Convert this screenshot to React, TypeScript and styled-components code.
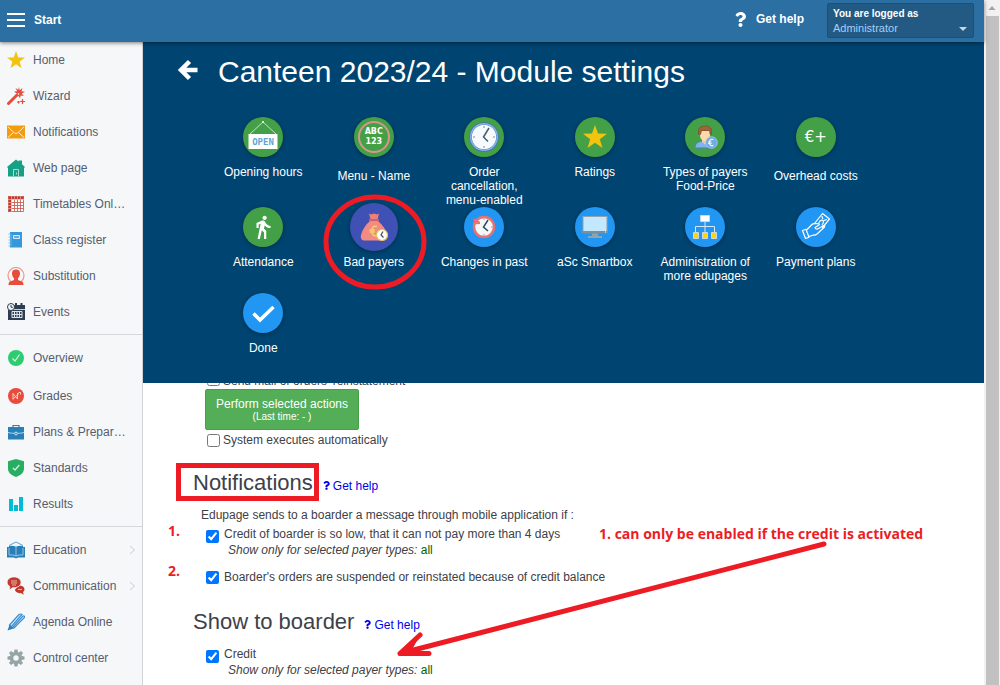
import React from "react";
import styled, { createGlobalStyle, css } from "styled-components";
import { FaQuestion } from "react-icons/fa";
import { MdDirectionsWalk } from "react-icons/md";

const RED = "#ed1c24";

const GlobalStyle = createGlobalStyle`
  * { box-sizing: border-box; }
  body {
    margin: 0;
    background: #fff;
    color: #3d4148;
    font: 12px/16px "Liberation Sans", Arial, sans-serif;
  }
  button { font: inherit; color: inherit; border: 0; padding: 0; background: none; cursor: pointer; }
  a { color: inherit; text-decoration: none; }
  svg { display: block; }
`;

const Page = styled.div`
  display: flex;
  min-height: 100vh;
`;

const Shell = styled.div`
  flex: 1;
  min-width: 0;
  display: flex;
  flex-direction: column;
`;

const ScrollTrack = styled.div`
  flex: 0 0 16px;
  display: flex;
  flex-direction: column;
  align-items: center;
  background: #f1f1f1;
`;

const ScrollArrow = styled.svg`
  width: 16px;
  height: 16px;
  fill: #a3a3a3;
`;

const ScrollThumb = styled.div`
  flex: 1;
  width: 13px;
  background: #c1c1c1;
`;

/* Header */

const TopBar = styled.header`
  position: relative;
  z-index: 2;
  display: flex;
  align-items: center;
  height: 42px;
  padding: 0 10px 2px 7px;
  background: #2b6fa3;
  color: #fff;
  font-weight: 700;
  box-shadow: 0 1px 4px rgba(0, 0, 0, 0.5);
`;

const StartButton = styled.button`
  display: flex;
  align-items: center;
  gap: 9px;
  margin-right: auto;
  font-weight: 700;
`;

const HelpButton = styled.a`
  display: flex;
  align-items: center;
  gap: 8px;
  margin-right: 23px;
  padding-bottom: 2px;
`;

const Account = styled.button`
  display: flex;
  justify-content: space-between;
  align-items: flex-end;
  width: 147px;
  height: 35px;
  padding: 4px 6px 2px 5px;
  border: 1px solid #1d5078;
  border-radius: 2px;
  background: #235a84;
  text-align: left;
`;

const AccountText = styled.span`
  display: flex;
  flex-direction: column;
  font-size: 10px;
  line-height: 14px;
  font-weight: 700;
`;

const AccountRole = styled.span`
  color: #a6cdf6;
  font-size: 11px;
  font-weight: 400;
`;

/* Sidebar */

const Body = styled.div`
  flex: 1;
  display: flex;
`;

const Sidebar = styled.nav`
  flex: 0 0 143px;
  border-right: 1px solid #cfd2d6;
  background: #f5f7f9;
  color: #565d70;
`;

const NavGroup = styled.ul`
  margin: 0;
  padding: 0 0 4px;
  list-style: none;
  & + & {
    padding-top: 5px;
    border-top: 1px solid #d4d8dc;
  }
`;

const NavItem = styled.li<{ $lead?: boolean }>`
  padding-bottom: ${(p) => (p.$lead ? "2px" : "0")};
`;

const NavLink = styled.a`
  display: flex;
  align-items: center;
  gap: 8px;
  height: 36px;
  padding: 0 6px 0 7px;
`;

const NavIcon = styled.svg`
  flex: none;
  width: 18px;
  height: 18px;
`;

const NavText = styled.span`
  flex: 1;
`;

/* Module settings panel */

const Main = styled.main`
  flex: 1;
  min-width: 0;
`;

const Panel = styled.section`
  padding: 0 113px 4px 65px;
  background: #004572;
  color: #fff;
`;

const TitleRow = styled.div`
  display: flex;
  align-items: center;
  gap: 19px;
  height: 60px;
  margin: 0 0 15px -31px;
`;

const BackButton = styled.button`
  padding-bottom: 4px;
`;

const Title = styled.h1`
  margin: 0;
  font-size: 30px;
  line-height: 36px;
  font-weight: 400;
  white-space: nowrap;
`;

const Tiles = styled.div`
  display: grid;
  grid-template-columns: repeat(6, 1fr);
  grid-auto-rows: minmax(86px, auto);
`;

const Tile = styled.button<{ $low?: boolean }>`
  position: relative;
  display: flex;
  flex-direction: column;
  align-items: center;
  gap: ${(p) => (p.$low ? "12px" : "8px")};
  line-height: 14px;
`;

const Disc = styled.span<{ $tone: string; $active?: boolean }>`
  display: grid;
  place-items: center;
  width: 40px;
  height: 40px;
  border-radius: 50%;
  background: ${(p) => p.$tone};
  box-shadow: 0 1px 5px rgba(0, 0, 0, 0.35);
  ${(p) =>
    p.$active &&
    css`
      width: 48px;
      height: 48px;
      margin: -4px;
    `}
`;

const TileLabel = styled.span`
  max-width: 100px;
`;

const Ring = styled.svg`
  position: absolute;
  top: -14px;
  left: 50%;
  margin-left: -52px;
  width: 106px;
  height: 98px;
  fill: none;
  stroke: ${RED};
  stroke-width: 5px;
  pointer-events: none;
`;

/* Settings below the panel */

const Settings = styled.section`
  position: relative;
  padding-left: 50px;
`;

const PlainCheck = styled.label`
  display: flex;
  align-items: center;
  gap: 3px;
  padding-left: 14px;
  line-height: 18px;
`;

/* A row that is scrolled almost wholly under the panel */
const ScrolledRow = styled.div`
  display: flex;
  align-items: flex-end;
  height: 3px;
  overflow: hidden;
  ${PlainCheck} {
    align-items: flex-end;
    line-height: 10px;
  }
`;

const ActionRow = styled.div`
  padding: 3px 0 1px 12px;
`;

const ActionButton = styled.button`
  display: flex;
  flex-direction: column;
  align-items: center;
  justify-content: center;
  width: 154px;
  height: 41px;
  border: 1px solid #45a049;
  border-radius: 2px;
  background: #54ad57;
  color: #fff;
  line-height: 14px;
`;

const Small = styled.span`
  font-size: 10px;
  line-height: 12px;
`;

const Box = styled.input`
  flex: none;
  width: 13px;
  height: 13px;
  margin: 0;
  accent-color: #0075ff;
`;

const HeadRow = styled.div`
  display: flex;
  align-items: baseline;
  gap: 9px;
  margin: 22px 0 6px;
  line-height: 30px;
  ${PlainCheck} + & {
    margin-top: 19px;
  }
`;

const Heading = styled.h2`
  position: relative;
  margin: 0;
  font-size: 22px;
  font-weight: 400;
`;

const Frame = styled.span`
  position: absolute;
  inset: -5px -6px -3px -17px;
  border: 5px solid ${RED};
`;

const HelpLink = styled.a`
  display: flex;
  align-items: baseline;
  gap: 2px;
  color: #0000ee;
`;

const Intro = styled.p`
  margin: 0;
  padding-left: 8px;
`;

const Option = styled.div<{ $noted?: boolean; $gap?: boolean }>`
  display: flex;
  align-items: flex-start;
  gap: 5px;
  margin-top: ${(p) => (p.$gap ? "11px" : "3px")};
  padding-left: 13px;
  ${Box} {
    margin-top: ${(p) => (p.$noted ? "4px" : "2px")};
  }
`;

const Note = styled.div`
  padding-left: 4px;
  font-style: italic;
`;

const All = styled.a`
  color: #006400;
  font-style: normal;
`;

const Remark = styled.span<{ $x: number; $y: number }>`
  position: absolute;
  left: ${(p) => p.$x}px;
  top: ${(p) => p.$y}px;
  color: ${RED};
  font: 700 14px/18px "Noto Sans", "Open Sans", sans-serif;
  font-family: "Open Sans", "Noto Sans", sans-serif;
  white-space: nowrap;
`;

const Arrow = styled.svg`
  position: absolute;
  left: 250px;
  top: 155px;
  width: 440px;
  height: 125px;
  fill: none;
  stroke: ${RED};
  stroke-width: 5px;
  stroke-linecap: round;
  stroke-linejoin: round;
  pointer-events: none;
`;

/* Sidebar drawings, all on an 18 x 18 grid */

const gearTeeth = [0, 45, 90, 135, 180, 225, 270, 315];

const navIcons: Record<string, React.ReactNode> = {
  star: <path d="M9 0l2.300 6.400 6.700.2-5.400 4.100 2 6.600L9 13.300 3.400 17.300l2-6.600L0 6.600l6.700-.2z" fill="#f1c40f" />,
  wand: (
    <g stroke="#e74c3c" fill="none">
      <path d="M1.500 16.500L10 8" strokeWidth="3" strokeLinecap="round" />
      <path d="M12 0l.7 3.200L15.500 1l-1 3.300 3.500.5-3.200 1.700 2 2.500-3.300-.6-.3 3-1.900-2.600-2.500 1 1.200-3L7 4.500l3.200-.2L8.500 1l2.800 1.700z" fill="#e74c3c" stroke="none" />
      <path d="M12 6.500L11 7.500" stroke="#f5f7f9" strokeWidth="1.500" />
      <path d="M15.500 12v5M13 14.500h5M11.500 14v2.400M10.300 15.200h2.400" strokeWidth="1.200" />
    </g>
  ),
  mail: (
    <g>
      <path d="M0 2.500h18v13H0z" fill="#f39c12" />
      <path d="M1 4l6.500 6Q9 11 10.500 10L17 4M1 14.500l5.500-5M17 14.500l-5.500-5" stroke="#fdebd0" fill="none" />
    </g>
  ),
  house: (
    <g>
      <path d="M0 8L9 .5l2.500 2V1.500H15v3.700L18 8l-1 1v8.500H1V9z" fill="#16a085" />
      <path d="M6.500 17.500v-7h5v7M9.500 13.500v2" stroke="#a9dccf" fill="none" />
    </g>
  ),
  table: (
    <g>
      <path d="M1 1h16v16H1z" fill="#fff" />
      <path d="M1 1h16v3H1zM1 1h3v16H1z" fill="#c0392b" />
      <path d="M1.500 1.500h15v15h-15zM7.500 4v13M10.500 4v13M13.500 4v13M4 7.500h13M4 10.500h13M4 13.500h13" fill="none" stroke="#cd6155" strokeWidth=".9" />
      <path d="M4.500 1v16M7.500 1v3M10.500 1v3M13.500 1v3M1 4.500h16M1 7.500h3M1 10.500h3M1 13.500h3" stroke="#e6b0aa" strokeWidth=".7" />
    </g>
  ),
  notebook: (
    <g>
      <path d="M3 1h12v15.500H3z" fill="#3498db" />
      <path d="M1.500 3h2M1.500 6h2M1.500 9h2M1.500 12h2M1.500 15h2" stroke="#7fb9e3" />
      <path d="M6.500 4.500h6v3h-6z" fill="#5dade2" stroke="#d6eaf8" />
      <path d="M4 3v12" stroke="#85c1e9" strokeWidth=".7" />
    </g>
  ),
  person: (
    <g>
      <circle cx="9" cy="8.500" r="8" fill="none" stroke="#f1948a" strokeWidth="1.200" />
      <path d="M9 2.500c3 0 4.300 2 4 4.500-.2 2-1 3.300-2 4.200V13l4.500 1.800q1 .8 1 3.200H1.500q0-2.400 1-3.200L7 13v-1.800C6 10.300 5.200 9 5 7c-.3-2.500 1-4.500 4-4.500z" fill="#e74c3c" />
    </g>
  ),
  calendar: (
    <g>
      <path d="M1 2h17v15H1z" fill="#2c3e50" />
      <path d="M1 6.500h17" stroke="#f5f7f9" strokeWidth=".8" />
      <path d="M5 8.500h10v6H5zM7.500 8v7M10 8v7M12.500 8v7M5 11.500h10" fill="none" stroke="#dfe4e8" />
      <path d="M9 0v3M14.500 0v3" stroke="#2c3e50" strokeWidth="2" />
      <circle cx="4" cy="4" r="3.500" fill="#f5f7f9" stroke="#2c3e50" />
      <path d="M4 2v2.300h1.800" stroke="#2c3e50" fill="none" />
    </g>
  ),
  check: (
    <g>
      <circle cx="9" cy="9" r="8" fill="#2ecc71" />
      <path d="M5.500 9.500L8 12l4.500-6.500" stroke="#d5f5e3" fill="none" strokeWidth="1.200" />
    </g>
  ),
  grades: (
    <g>
      <circle cx="9" cy="9" r="8" fill="#e74c3c" />
      <path d="M6 12.500v-6l4.500 5.500V6M6 12l6-5.500M11.500 5.500h2v2" stroke="#f9d0cb" fill="none" />
    </g>
  ),
  briefcase: (
    <g>
      <path d="M6 4v-1.500h6V4" fill="none" stroke="#2980b9" strokeWidth="1.200" />
      <path d="M1 4h16v12.500H1z" fill="#2980b9" />
      <path d="M1 9.500q4 1 6.500.8M17 9.500q-4 1-6.500.8" stroke="#aed6f1" fill="none" />
      <circle cx="9" cy="10.500" r="1.400" fill="#2980b9" stroke="#d6eaf8" />
    </g>
  ),
  shield: (
    <g>
      <path d="M9 0l8 2.200v7.300C17 14 13.500 16.300 9 18c-4.500-1.700-8-4-8-8.500V2.200z" fill="#27ae60" />
      <path d="M5.800 8.800L8 11l4.300-5" stroke="#d5f5e3" fill="none" strokeWidth="1.200" />
    </g>
  ),
  bars: <path d="M2 4h4v12H2zM7 10h4v6H7zM12 2h4v14h-4z" fill="#00bcd4" />,
  book: (
    <g>
      <path d="M2 4.500L9 1l7 3.500" fill="none" stroke="#5ba5d4" />
      <path d="M0 6h2V5q4-1 7 .8 3-1.800 7-.8v1h2v10.500h-7l-2 1-2-1H0z" fill="#2980b9" />
      <path d="M9 6v9M2 7v7q4.500-.5 7 1 2.500-1.500 7-1V7" stroke="#aed6f1" fill="none" strokeWidth=".8" />
    </g>
  ),
  chat: (
    <g>
      <path d="M12 8.500c3.500 0 5.500 1.500 5.500 3.800 0 1.200-.6 2.200-1.500 2.800l.8 2.700-3-1.700c-3.500.3-5.800-1.300-5.800-3.600z" fill="#c0392b" />
      <path d="M7 0c4 0 7 2.300 7 5.300s-3 5.400-7 5.400l-1.200-.1L2.500 13l.3-3.500C1.100 8.500.2 7 .2 5.300.2 2.300 3 0 7 0z" fill="#c0392b" stroke="#f5f7f9" strokeWidth=".7" />
      <path d="M4 4h6M4 6h6M5 8h4M11 12.500h4" stroke="#f2d7d5" strokeWidth=".8" />
    </g>
  ),
  pencil: (
    <g fill="none" stroke="#3b8fd0" strokeWidth="1.200">
      <path d="M5.500 14.500L16 3q2-.5 1.500 1.500L7 15z" fill="#d4e8f8" />
      <path d="M2.500 12L12 1.500q1.500-1 3 0L4.500 13.500z" fill="#d4e8f8" />
      <path d="M.5 17.500L2.500 12l4 3.500z" fill="#2980b9" stroke="none" />
    </g>
  ),
  gear: (
    <g>
      {gearTeeth.map((angle) => (
        <path key={angle} d="M7.500.5h3l.7 4H6.800z" fill="#95a5a6" transform={`rotate(${angle} 9 9)`} />
      ))}
      <circle cx="9" cy="9" r="4.400" fill="none" stroke="#95a5a6" strokeWidth="3.400" />
    </g>
  ),
};

type NavEntry = { icon: string; text: string; lead?: boolean; more?: boolean };

const navGroups: NavEntry[][] = [
  [
    { icon: "star", text: "Home" },
    { icon: "wand", text: "Wizard" },
    { icon: "mail", text: "Notifications" },
    { icon: "house", text: "Web page" },
    { icon: "table", text: "Timetables Onl…" },
    { icon: "notebook", text: "Class register" },
    { icon: "person", text: "Substitution" },
    { icon: "calendar", text: "Events" },
  ],
  [
    { icon: "check", text: "Overview", lead: true },
    { icon: "grades", text: "Grades" },
    { icon: "briefcase", text: "Plans & Prepar…" },
    { icon: "shield", text: "Standards" },
    { icon: "bars", text: "Results" },
  ],
  [
    { icon: "book", text: "Education", more: true },
    { icon: "chat", text: "Communication", more: true },
    { icon: "pencil", text: "Agenda Online" },
    { icon: "gear", text: "Control center" },
  ],
];

/* Tile drawings */

const AbcRing = styled.span`
  display: grid;
  place-items: center;
  width: 32px;
  height: 32px;
  border: 2px solid #d9958a;
  border-radius: 50%;
  font: 700 8px/10px "DejaVu Sans", sans-serif;
`;

const EuroText = styled.span`
  font: 400 15px/18px "DejaVu Sans", sans-serif;
`;

const OpenSign = (
  <svg width="40" height="40" viewBox="0 0 40 40">
    <path d="M7 17L20 5l13 12" fill="none" stroke="#c3e3c4" />
    <circle cx="20" cy="5" r="1" fill="#fff" />
    <path d="M5.500 17h29v15h-29z" fill="#fff" />
    <text x="20" y="28" textAnchor="middle" fontFamily="DejaVu Sans Mono, monospace" fontSize="9" fontWeight="700" fill="#5fa5d0">OPEN</text>
  </svg>
);

const Clock = (
  <svg width="40" height="40" viewBox="0 0 40 40">
    <circle cx="20" cy="20" r="13.500" fill="#f7fafc" stroke="#3e6fb5" strokeWidth="2.500" />
    <circle cx="20" cy="20" r="13.300" fill="none" stroke="#8ab4e8" strokeWidth="1.500" />
    <path d="M20 9v2M20 29v2M9 20h2M29 20h2" stroke="#7d8fa3" />
    <path d="M25 11l-5.500 9 4.500 4.500" fill="none" stroke="#4a5a6a" strokeWidth="1.500" />
  </svg>
);

const Star = (
  <svg width="40" height="40" viewBox="0 0 40 40">
    <path d="M20 8l3 8.500 9 .2-7.200 5.500 2.700 8.800-7.500-5.200-7.500 5.200 2.700-8.800L8 16.700l9-.2z" fill="#f1c40f" />
  </svg>
);

const Payer = (
  <svg width="40" height="40" viewBox="0 0 40 40">
    <path d="M10 31c0-5 3-6 7-7h5c4 1 6 3 6 7z" fill="#7fb2ee" stroke="#4a7fc0" />
    <path d="M17 21h6v4l-3 2.500-3-2.500z" fill="#f3c99b" />
    <path d="M15 14h10v4c0 4-2.500 6-5 6s-5-2-5-6z" fill="#fbd9a8" />
    <path d="M13.500 17v-3c0-3 2-4.500 4-4.500 4-1.500 9 0 9 4v4l-1.500-.5-.5-3.500h-8l-1 4z" fill="#a5603c" stroke="#7d452b" strokeWidth=".6" />
    <circle cx="26.500" cy="25.500" r="5.800" fill="#72a9ea" stroke="#a9c9f2" strokeWidth=".8" />
    <path d="M28.500 22.500q-4-1-4 3t4 3M23 25h3.500M23 26.500h3.500" fill="none" stroke="#fff2c2" strokeWidth="1.200" />
  </svg>
);

const MoneyBag = (
  <svg width="48" height="48" viewBox="0 0 48 48">
    <path d="M19 10.500l2 1 3-1 3 1 2-1-1.500 6h-7z" fill="#ef8079" />
    <path d="M20 18h8c5 4 8 9 9.500 14 .8 3-1 5.500-4 5.500h-19c-3 0-4.300-2.500-3.500-5.500 1.500-5 4-10 9-14z" fill="#f28b82" />
    <path d="M19 17h10" stroke="#d96161" strokeWidth="1.800" />
    <path d="M27 23.500q-5-1.500-5 4.500t5 4.500M19.500 27h5.500M19.500 29h5.500" fill="none" stroke="#f6cf70" strokeWidth="1.500" />
    <circle cx="32" cy="32" r="5.500" fill="#fff" stroke="#e5c35c" strokeWidth="1.200" />
    <path d="M33 28.500l-2 3.500 2.500 2.500" fill="none" stroke="#3c4a5a" strokeWidth="1.200" />
  </svg>
);

const History = (
  <svg width="40" height="40" viewBox="0 0 40 40">
    <circle cx="20" cy="20" r="10" fill="#f5f8fb" stroke="#e57373" strokeWidth="2.500" />
    <path d="M9.500 11l1 6.500 5.500-3z" fill="#ef7070" />
    <path d="M9 16.500l7-.5" stroke="#ef7070" strokeWidth="2" />
    <path d="M24 13l-4.500 7 4.500 4" fill="none" stroke="#34495e" strokeWidth="1.500" />
    <path d="M20 11.500v1.500M20 27v1.500M27 20h1.500" stroke="#8795a3" />
  </svg>
);

const Monitor = (
  <svg width="40" height="40" viewBox="0 0 40 40">
    <path d="M7.500 9h25v17h-25z" fill="#90a4ae" />
    <path d="M8.500 10h23v14h-23z" fill="#c3e7fd" />
    <path d="M7.500 24h25v2.500h-25z" fill="#78909c" />
    <path d="M17 26.500h6v3h-6zM13 29h14v2H13z" fill="#90a4ae" />
    <path d="M30 25h1" stroke="#fff" />
  </svg>
);

const Chart = (
  <svg width="40" height="40" viewBox="0 0 40 40">
    <path d="M20 14v11M10.500 25v-5.500h19V25" fill="none" stroke="#dbe7f0" />
    <path d="M15.500 8.500h9v6h-9z" fill="#fff" stroke="#cfd8dc" />
    <path d="M8.500 25.500h5v6h-5zM17.500 25.500h5v6h-5zM26.500 25.500h5v6h-5z" fill="#ffd600" stroke="#cfd8dc" />
  </svg>
);

const Payment = (
  <svg width="40" height="40" viewBox="0 0 40 40">
    <g fill="none" stroke="#fff" strokeWidth="1.200" strokeLinejoin="round" strokeLinecap="round">
      <path d="M6.500 23.500l3.500-1.200 3 8-3.500 1.200z" />
      <path d="M10.500 23l5.500-5.500q1-1 3-.8l3-.2q2 .2 1 1.500l-4 2.500q1 2.500 3.500 1l5-3q1.800 0 1 1.500l-7.500 7q-1.500 1.300-3.500 1.200l-5 1.300" />
      <path d="M18.500 16.500L26.500 6.500l7 5.500-7 8.500" />
      <path d="M26 9.500l.8 2.200M30.500 12.500l-2.500 1" />
      <path d="M23 15.500q1.500-3 3.500-2.200 2 1.200-.2 4.200" />
    </g>
  </svg>
);

const Tick = (
  <svg width="40" height="40" viewBox="0 0 40 40">
    <path d="M10.500 20.500l6.500 6.500 13.500-13" fill="none" stroke="#fff" strokeWidth="3.500" />
  </svg>
);

const GREEN = "#43a047";
const BLUE = "#2196f3";

type TileEntry = { label: React.ReactNode; tone: string; art: React.ReactNode; low?: boolean; active?: boolean };

const tiles: TileEntry[] = [
  { label: "Opening hours", tone: GREEN, art: OpenSign },
  { label: "Menu - Name", tone: GREEN, low: true, art: <AbcRing>ABC<br />123</AbcRing> },
  { label: "Order cancellation, menu-enabled", tone: GREEN, art: Clock },
  { label: "Ratings", tone: GREEN, art: Star },
  { label: <>Types of payers<br />Food-Price</>, tone: GREEN, art: Payer },
  { label: "Overhead costs", tone: GREEN, low: true, art: <EuroText>€+</EuroText> },
  { label: "Attendance", tone: GREEN, art: <MdDirectionsWalk size={26} /> },
  { label: "Bad payers", tone: "#3f51b5", active: true, art: MoneyBag },
  { label: "Changes in past", tone: BLUE, art: History },
  { label: "aSc Smartbox", tone: BLUE, art: Monitor },
  { label: "Administration of more edupages", tone: BLUE, art: Chart },
  { label: "Payment plans", tone: BLUE, art: Payment },
  { label: "Done", tone: BLUE, art: Tick },
];

function GetHelp() {
  return (
    <HelpLink href="#help">
      <FaQuestion size={9} />
      Get help
    </HelpLink>
  );
}

function PayerNote() {
  return (
    <Note>
      Show only for selected payer types: <All href="#all">all</All>
    </Note>
  );
}

export default function App() {
  return (
    <Page>
      <GlobalStyle />
      <Shell>
        <TopBar>
          <StartButton>
            <svg width="18" height="14" viewBox="0 0 18 14">
              <path d="M0 1h18M0 7h18M0 13h18" stroke="#fff" strokeWidth="2" />
            </svg>
            Start
          </StartButton>
          <HelpButton href="#help">
            <FaQuestion size={15} />
            Get help
          </HelpButton>
          <Account aria-haspopup="menu">
            <AccountText>
              You are logged as
              <AccountRole>Administrator</AccountRole>
            </AccountText>
            <svg width="8" height="10" viewBox="0 0 8 10">
              <path d="M0 2h8L4 6z" fill="#c9d6e2" />
            </svg>
          </Account>
        </TopBar>
        <Body>
          <Sidebar>
            {navGroups.map((group, i) => (
              <NavGroup key={i}>
                {group.map((item) => (
                  <NavItem key={item.text} $lead={item.lead}>
                    <NavLink href="#">
                      <NavIcon viewBox="0 0 18 18">{navIcons[item.icon]}</NavIcon>
                      <NavText>{item.text}</NavText>
                      {item.more && (
                        <svg width="7" height="10" viewBox="0 0 7 10">
                          <path d="M1 1l4.500 4L1 9" fill="none" stroke="#c8ccd2" />
                        </svg>
                      )}
                    </NavLink>
                  </NavItem>
                ))}
              </NavGroup>
            ))}
          </Sidebar>
          <Main>
            <Panel>
              <TitleRow>
                <BackButton aria-label="Back">
                  <svg width="22" height="22" viewBox="0 0 22 22">
                    <path d="M20.500 11H5M12.500 2.500L4 11l8.500 8.500" fill="none" stroke="#fff" strokeWidth="4.500" />
                  </svg>
                </BackButton>
                <Title>Canteen 2023/24 - Module settings</Title>
              </TitleRow>
              <Tiles>
                {tiles.map((tile, i) => (
                  <Tile key={i} $low={tile.low}>
                    <Disc $tone={tile.tone} $active={tile.active}>
                      {tile.art}
                    </Disc>
                    <TileLabel>{tile.label}</TileLabel>
                    {tile.active && (
                      <Ring viewBox="0 0 106 98">
                        <ellipse cx="53" cy="49" rx="49" ry="45" />
                      </Ring>
                    )}
                  </Tile>
                ))}
              </Tiles>
            </Panel>
            <Settings>
              <ScrolledRow>
                <PlainCheck>
                  <Box type="checkbox" />
                  Send mail of orders' reinstatement
                </PlainCheck>
              </ScrolledRow>
              <ActionRow>
                <ActionButton>
                  Perform selected actions
                  <Small>(Last time: - )</Small>
                </ActionButton>
              </ActionRow>
              <PlainCheck>
                <Box type="checkbox" />
                System executes automatically
              </PlainCheck>
              <HeadRow>
                <Heading>
                  Notifications
                  <Frame />
                </Heading>
                <GetHelp />
              </HeadRow>
              <Intro>Edupage sends to a boarder a message through mobile application if :</Intro>
              <Option $noted>
                <Box type="checkbox" id="low-credit" defaultChecked />
                <div>
                  <label htmlFor="low-credit">Credit of boarder is so low, that it can not pay more than 4 days</label>
                  <PayerNote />
                </div>
              </Option>
              <Option $gap>
                <Box type="checkbox" id="suspended" defaultChecked />
                <label htmlFor="suspended">Boarder's orders are suspended or reinstated because of credit balance</label>
              </Option>
              <HeadRow>
                <Heading>Show to boarder</Heading>
                <GetHelp />
              </HeadRow>
              <Option $noted>
                <Box type="checkbox" id="credit" defaultChecked />
                <div>
                  <label htmlFor="credit">Credit</label>
                  <PayerNote />
                </div>
              </Option>
              <Remark $x={25} $y={139}>1.</Remark>
              <Remark $x={25} $y={179}>2.</Remark>
              <Remark $x={456} $y={142}>1. can only be enabled if the credit is activated</Remark>
              <Arrow viewBox="0 0 440 125">
                <path d="M431 6L7 115.500M27 97L7 115.500H36" />
                <path d="M27 97L7 115.500H36L20 110z" fill={RED} stroke="none" />
              </Arrow>
            </Settings>
          </Main>
        </Body>
      </Shell>
      <ScrollTrack>
        <ScrollArrow viewBox="0 0 16 16">
          <path d="M4.500 10L8 6l3.500 4z" />
        </ScrollArrow>
        <ScrollThumb />
      </ScrollTrack>
    </Page>
  );
}
